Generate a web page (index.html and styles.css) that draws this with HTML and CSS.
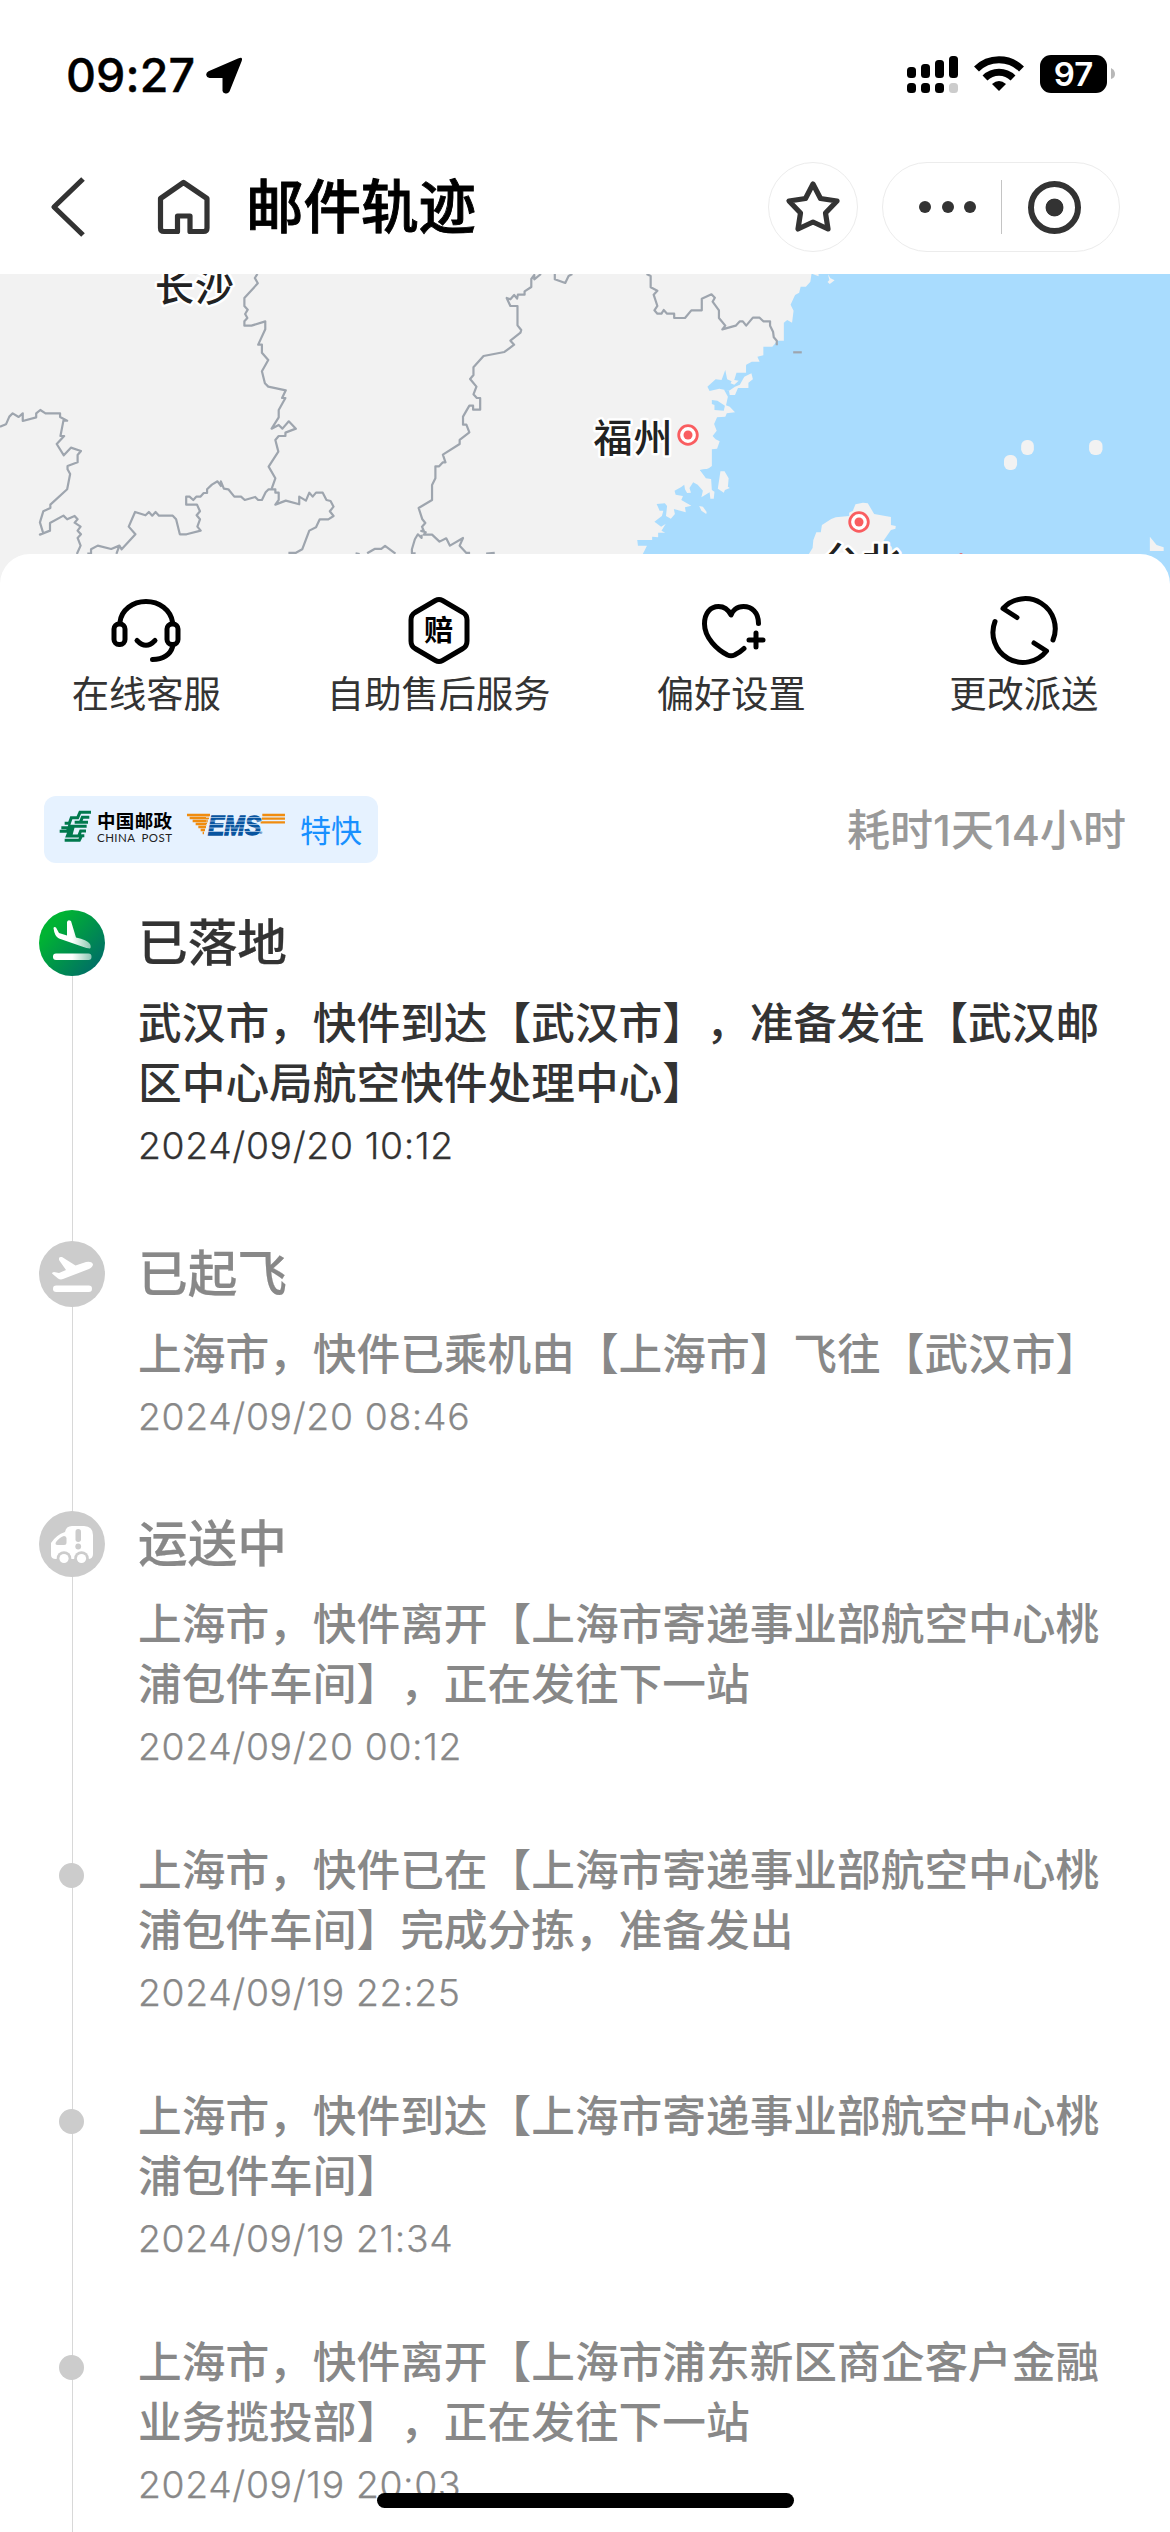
FILE: index.html
```html
<!DOCTYPE html>
<html lang="zh-CN">
<head>
<meta charset="utf-8">
<title>邮件轨迹</title>
<link rel="stylesheet" href="styles.css">
</head>
<body>
<div class="screen">
  <header class="status">
    <div class="status-left">
      <span class="clock">09:27</span>
      <svg class="locate" viewBox="206 57 37 37"><path d="M238 58.500Q243.500 56 241.500 61.500L229.500 91.500Q228 94 225.500 93.500Q223 93 222.500 91V78H209.500Q206.500 77.500 206.200 75Q206 72.500 208.500 71.300Z"/></svg>
    </div>
    <svg class="status-right" viewBox="907 55 209 38">
      <g><rect x="907" y="67" width="9" height="11" rx="3.500"/><rect x="921" y="64" width="9" height="14" rx="3.500"/><rect x="935" y="60" width="9" height="18" rx="3.500"/><rect x="949" y="56" width="9" height="22" rx="3.500"/>
      <rect x="907" y="83" width="9" height="10" rx="3.500"/><rect x="921" y="83" width="9" height="10" rx="3.500"/><rect x="935" y="83" width="9" height="10" rx="3.500"/><rect x="949" y="83" width="9" height="10" rx="3.500" fill="#ccc"/></g>
      <g fill="none" stroke="#000" stroke-width="7"><path d="M976.500 69A32 32 0 0 1 1021.500 69"/><path d="M985 78A20 20 0 0 1 1013 78"/></g>
      <path d="M999 91L992 84Q999 78 1006 84Z"/>
      <rect x="1040" y="55" width="67" height="38" rx="11"/>
      <path d="M1111 68Q1115 70 1115 74T1111 79Z" fill="#b8b8b8"/>
      <text class="battery" x="1073.500" y="86" text-anchor="middle">97</text>
    </svg>
  </header>

  <nav class="nav">
    <svg class="back" viewBox="50 177 36 60"><path d="M83 179L54 207L83 235"/></svg>
    <svg class="home" viewBox="156 179 56 58"><path d="M183.500 183.500L207 199.500V229Q207 232.500 203.500 232.500H190V217H177.500V232.500H164Q160.500 232.500 160.500 229V199.500Z"/></svg>
    <h1 class="nav-title">邮件轨迹</h1>
    <div class="round"><svg class="star" viewBox="785 180 56 54"><path d="M813 184L820.500 198.500L837 201L825.500 213L828 229L813 222L798 229L800.500 213L789 201L805.500 198.500Z"/></svg></div>
    <div class="capsule">
      <span class="dots"><i></i><i></i><i></i></span>
      <span class="divider"></span>
      <span class="target"></span>
    </div>
  </nav>

  <svg class="map" viewBox="0 0 1170 310">
    <rect width="1170" height="310" fill="#f2f2f2"/>
    <g transform="matrix(.3731 0 0 .3333 585 -14)">
      <path class="sea" d="M607 42L604 65L592 80H578L574 98L563 105L551 134L559 152L555 188L542 180L533 188V242H516L502 260H478V286L462 290L468 305H447L432 314V338L446 340L450 358L438 368V384H410L402 405H388L386 392L372 388L383 410L378 436L388 440L402 457L380 460L376 470L354 472L346 492L353 512L342 528L350 538L361 544L354 566L340 568V618L330 626L308 630L324 655L338 657L340 690L347 695L345 716H336L334 697L312 712L316 692L302 674L290 667L280 684L284 698L266 700L258 720L285 737L268 742L270 757L238 747L241 762L230 776L217 768L220 738L214 730L192 732L200 752H210L206 768L186 785L204 800L216 792L205 812L215 818H196V832L180 830V840H140L142 857H166L155 882V980H1568V42Z"/>
      <path class="sea" d="M432 314V338H406L400 360L412 362L400 374L390 370L393 364L381 358L376 330L366 360L350 358L328 380L334 393L360 386L386 392L402 380L415 374L427 350L446 340ZM340 420L355 422L375 437L372 452L347 450V435L340 432ZM308 630L320 645L338 657V625ZM266 674L258 681L240 692L243 704L262 708L266 718L274 700L268 688Z"/>
      <path class="land" d="M363 634L374 634L385 655L383 680L388 684L375 690L372 698L356 686ZM306 738L316 740L326 756L325 762L312 752ZM610 42H626V49ZM651 43L658 55L669 61L656 72L650 66L655 60ZM600 882L610 864L612 840L620 817H632L635 795L660 777L672 772L708 768V758L718 752L725 733L745 728L758 730L775 762L820 771V795L833 798L832 806L820 810L800 842L822 860L830 900H600ZM1514 830L1532 855L1551 862V873H1514Z"/>
      <rect class="land" x="1169" y="540" width="34" height="45" rx="15" ry="17"/><rect class="land" x="1123" y="585" width="35" height="45" rx="15" ry="17"/><rect class="land" x="1351" y="540" width="36" height="45" rx="15" ry="17"/>
      <g class="border"><path d="M165 42L176 48V82L194 92L184 104L194 138L186 151L194 161H205L211 150L220 161H239V174H268L285 151H313V116L339 103L348 113L342 125L359 151V174L376 197L368 208L404 197L415 184H423L432 197L450 173H468L478 184H496V197L504 215L506 232L514 242V256"/><path d="M558 277H581"/></g>
    </g>
    <g class="border" transform="matrix(.3731 0 0 .3333 0 -14)">
      <path d="M690 42L683 54L691 70L655 114V138L664 149L657 162L663 174L655 184V197H674L711 184V208L692 254H702V278L719 300L702 334L710 370L719 380L766 391L756 414H765L747 450V472L728 506L747 495L757 506L774 484L793 506L765 518V528H747L738 540L746 575L720 620L738 655L728 687"/>
      <path d="M0 500L16 493L25 470L34 460L50 471L61 460V483L97 472V460L108 450L122 460H161V471L180 482H170L162 528H172L152 552L171 586L190 563L217 573L208 585V607L181 618V628L188 642L180 688L135 734V744L116 754L107 787L116 820L107 824L134 812V789L170 767L180 778L200 768L208 778L200 788L216 800L208 812L217 823L208 834L216 857L206 882"/>
      <path d="M234 881H244V868L262 857L298 867L320 857L312 882M320 857L326 868L363 823L345 800L362 756L390 766L399 756L408 767L417 756L426 767H463L472 778L482 823H500L538 812L529 800L536 778L527 766L536 754L528 734H499V710H508L518 720L526 710H537L546 699H555V688L568 674L583 664L592 678L592 664L600 686L612 688L628 710H646L656 720L684 711L692 720H702L712 697L720 688H738V698H747V720L738 734L766 722L802 733V710L820 722L829 698L838 710L847 698H865L875 720L886 723L894 740L884 754L894 768L880 778H857L847 802L829 812L810 868L792 879H773"/>
      <path d="M1450 42L1432 58V45L1424 57V81L1406 94V104H1388L1386 116L1378 105L1368 118L1358 114L1368 138H1387V196L1397 210L1395 218L1368 242L1378 254L1352 276L1296 288L1269 322V345L1260 357L1277 380L1269 403L1278 414H1287V449H1268V437H1258L1241 470V494H1250L1258 517L1232 540V552L1187 584L1194 607H1187L1177 619H1167V655L1158 675V720L1122 744L1132 778L1140 789L1131 800L1136 813H1129L1141 817L1136 824H1158L1178 845L1196 835L1206 857L1241 834L1232 857L1250 879H1260M1130 824V834L1120 823L1112 838L1104 868V880H1114M1487 42V58L1515 69L1524 48L1534 42M953 880L964 882M984 880L1004 867H1022L1032 858L1060 881M1303 881L1326 879"/>
    </g>
    <path d="M957 281L961 279L965 281Z" fill="#e55"/>
    <g class="marker"><circle cx="688" cy="161" r="9.300"/><circle class="core" cx="688" cy="161" r="4.500"/><circle cx="859" cy="248" r="9.300"/><circle class="core" cx="859" cy="248" r="4.500"/></g>
    <g class="city"><text x="155" y="27">长沙</text><text x="593.500" y="178">福州</text><text x="822" y="302">台北</text></g>
  </svg>

  <main class="sheet">
    <section class="services">
      <div class="service">
        <svg viewBox="106.500 594 80 72"><path d="M120.500 622C122 610 133 601.500 146.500 601.500S171 610 173 622M173 647C171 654 164 659.500 153 659.500M137.500 640.500Q146.500 650 155.500 640.500"/><rect x="114.500" y="624" width="11" height="20.500" rx="5"/><rect x="167.500" y="624" width="11" height="20.500" rx="5"/></svg>
        <span>在线客服</span>
      </div>
      <div class="service">
        <svg viewBox="398.500 594 80 72"><path d="M435 600.500Q438.500 598.500 442 600.500L462.500 612.500Q466.500 615 466.500 620V641Q466.500 646 462.500 648.500L442 660.500Q438.500 662.500 435 660.500L414.500 648.500Q410.500 646 410.500 641V620Q410.500 615 414.500 612.500Z"/><text x="438.200" y="641" text-anchor="middle">赔</text></svg>
        <span>自助售后服务</span>
      </div>
      <div class="service">
        <svg viewBox="691.500 594 80 72"><path d="M759 623.500C759 612 752 606.500 744 606.500C737 606.500 733 611 731.500 615C729 610 725 606.500 719 606.500C711 606.500 705 613 705 624C705 638 718 650 728 655Q731.500 656.500 735 655Q741 652 744.500 648.500M749.500 640H763.500M756.500 633V647"/></svg>
        <span>偏好设置</span>
      </div>
      <div class="service">
        <svg viewBox="983.500 594 80 72"><path d="M1016.500 617.500L1002.500 608.500A30 30 0 0 1 1052.500 640M994.500 621.500A30 30 0 0 0 1046 651L1033.500 643"/></svg>
        <span>更改派送</span>
      </div>
    </section>

    <section class="summary">
      <div class="badge">
        <svg class="brands" viewBox="59 808 228 42">
          <g transform="matrix(.3333 0 0 .3333 30 780)">
            <path class="post" d="M183 97H150L143 113H124L118 130H104M178 112H157L151 127H134M89 154H112L118 139H170M94 143H122L112 168H146L152 153H168M174 127H150M104 181H148L155 167H163M130 139L122 168"/>
            <path class="ems-bar" d="M471 105H540M479 114H537M488 123H534M497 132H531M505 141H528M512 150H525M518 159H522M697 105H765M695 116H765M692 127H765"/>
          </g>
          <text class="cn" x="97" y="828" textLength="75">中国邮政</text>
          <text class="en" x="97" y="842" textLength="75">CHINA POST</text>
          <text class="ems" x="208" y="834.500" textLength="53" lengthAdjust="spacingAndGlyphs">EMS</text>
          <path class="slit" d="M206 817.500H262M206 821H262M206 824.500H262M206 828H262M206 831.500H262"/>
          <text class="reg" x="259" y="835">®</text>
        </svg>
        <span class="badge-text">特快</span>
      </div>
      <span class="elapsed">耗时1天14小时</span>
    </section>

    <ol class="timeline">
      <li class="step current">
        <svg class="node" viewBox="0 0 66 66"><defs><linearGradient id="green" x1="0.100" y1="0.200" x2="0.900" y2="0.900"><stop offset="0.100" stop-color="#00b333"/><stop offset="1" stop-color="#006c68"/></linearGradient><linearGradient id="fade"><stop offset="0.500" stop-color="#fff"/><stop offset="1" stop-color="#fff" stop-opacity="0.550"/></linearGradient></defs><circle cx="33" cy="33" r="33" fill="url(#green)"/><path fill="url(#fade)" d="M14.500 18Q15 16.500 17 17.500L20 23L28 25.500V12Q29 9 32 11L37 27.500Q48 29.500 51 34Q52.500 37.500 51 38.500Q48 38.500 43 36.500L20 28.500Q15.500 26.500 14.500 18Z"/><rect x="14" y="43.500" width="38.500" height="6.500" rx="3" fill="url(#fade)"/></svg>
        <h2>已落地</h2>
        <p>武汉市，快件到达【武汉市】，准备发往【武汉邮区中心局航空快件处理中心】</p>
        <time>2024/09/20 10:12</time>
      </li>
      <li class="step">
        <svg class="node" viewBox="0 0 66 66"><circle cx="33" cy="33" r="33" fill="#ccc"/><path fill="#fff" d="M20 17Q20.500 15.500 23 16L36.500 24.500L47 21Q52.500 20 54 23Q54 26 50 28L24 38Q21.500 39 19 37.500L13 32.500Q13 31 15 31L20 32L27 29L20 19Z"/><rect x="14" y="44.500" width="39" height="6.500" rx="3.200" fill="#fff"/></svg>
        <h2>已起飞</h2>
        <p>上海市，快件已乘机由【上海市】飞往【武汉市】</p>
        <time>2024/09/20 08:46</time>
      </li>
      <li class="step">
        <svg class="node" viewBox="0 0 66 66"><circle cx="33" cy="33" r="33" fill="#ccc"/><path fill="#fff" d="M12 32Q17 24 26 21Q27 15 33 15H45Q54 15.500 54 24V43Q54 48 49 48H17Q12 48 12 44Z"/><g fill="#ccc"><path d="M17 31Q21 26 25 25Q27 25 27.500 27V31.500Q27.500 34 25 34H18.500Q15.500 34 17 31Z"/><rect x="36.500" y="18" width="5.500" height="13" rx="2.700"/><circle cx="39.200" cy="35.500" r="2.900"/><circle cx="25" cy="47.500" r="7.300"/><circle cx="42.500" cy="47.500" r="7.300"/></g><circle cx="25" cy="47.500" r="4.600" fill="#fff"/><circle cx="42.500" cy="47.500" r="4.600" fill="#fff"/></svg>
        <h2>运送中</h2>
        <p>上海市，快件离开【上海市寄递事业部航空中心桃浦包件车间】，正在发往下一站</p>
        <time>2024/09/20 00:12</time>
      </li>
      <li class="step minor">
        <span class="dot"></span>
        <p>上海市，快件已在【上海市寄递事业部航空中心桃浦包件车间】完成分拣，准备发出</p>
        <time>2024/09/19 22:25</time>
      </li>
      <li class="step minor">
        <span class="dot"></span>
        <p>上海市，快件到达【上海市寄递事业部航空中心桃浦包件车间】</p>
        <time>2024/09/19 21:34</time>
      </li>
      <li class="step minor">
        <span class="dot"></span>
        <p>上海市，快件离开【上海市浦东新区商企客户金融业务揽投部】，正在发往下一站</p>
        <time>2024/09/19 20:03</time>
      </li>
    </ol>
  </main>
  <div class="home-indicator"></div>
</div>
</body>
</html>
```
FILE: styles.css
```css
* { box-sizing: border-box; margin: 0; padding: 0; }

body {
  background: #fff;
  font-family: Inter, "Noto Sans CJK SC", sans-serif;
  color: #333;
  text-spacing-trim: space-all;
}

.screen {
  position: relative;
  width: 1170px;
  height: 2532px;
  overflow: hidden;
  display: flex;
  flex-direction: column;
}

.status {
  flex: none;
  height: 140px;
  display: flex;
  justify-content: space-between;
  align-items: flex-start;
  padding: 55px 54px 0 66px;
}
.status-left { display: flex; align-items: center; height: 40px; gap: 12px; }
.clock { font-size: 46.500px; font-weight: 500; -webkit-text-stroke: 0.400px #000; line-height: 40px; color: #000; width: 128px; letter-spacing: 0.100px; white-space: nowrap; }
.locate { width: 37px; height: 37px; }
.status-right { width: 209px; height: 38px; }
.battery { font-size: 33px; font-weight: 600; fill: #fff; }

.nav {
  flex: none;
  height: 134px;
  display: flex;
  align-items: center;
  padding-left: 50px;
}
.nav svg { fill: none; stroke: #333; stroke-width: 5.200; stroke-linejoin: round; }
.back { width: 36px; height: 60px; }
.home { width: 56px; height: 58px; margin-left: 70px; }
.nav-title { margin-left: 34px; font-size: 57.500px; line-height: 80px; font-weight: 500; -webkit-text-stroke: 0.900px #000; color: #000; width: 240px; white-space: nowrap; }
.round { margin-left: 282px; width: 90px; height: 90px; border: 1px solid #ececec; border-radius: 50%; display: grid; place-items: center; }
.star { width: 56px; height: 54px; }
.capsule { margin-left: 24px; width: 238px; height: 90px; border: 1px solid #ececec; border-radius: 45px; display: flex; align-items: center; padding-left: 36px; }
.dots { display: flex; gap: 10.500px; width: 82px; }
.dots i { width: 12px; height: 12px; border-radius: 50%; background: #333; }
.divider { width: 1px; height: 54px; background: #c4c4c4; }
.target { margin-left: 26px; width: 53px; height: 53px; border: 6.500px solid #333; border-radius: 50%; background: radial-gradient(circle, #333 8.500px, transparent 9.300px); }

.map { flex: none; display: block; width: 1170px; height: 310px; }
.sea { fill: #a9dcfe; }
.land { fill: #f2f2f2; }
.border path { fill: none; stroke: #9ea5ae; stroke-width: 2.200px; vector-effect: non-scaling-stroke; stroke-linejoin: round; }
.marker circle { fill: #fff; stroke: #f95d60; stroke-width: 2.800; }
.marker .core { fill: #f95d60; stroke: none; }
.city text { font-size: 39px; font-weight: 500; fill: #222; stroke: #fff; stroke-width: 5px; paint-order: stroke; stroke-linejoin: round; letter-spacing: 1px; }

.sheet {
  flex: none;
  position: relative;
  margin-top: -30px;
  background: #fff;
  border-radius: 30px 30px 0 0;
  padding-top: 40px;
}

.services { display: grid; grid-template-columns: repeat(4, 1fr); }
.service { display: flex; flex-direction: column; align-items: center; }
.service svg { width: 80px; height: 72px; fill: none; stroke: #000; stroke-width: 5; stroke-linecap: round; stroke-linejoin: round; }
.service svg text { font-size: 29px; font-weight: 700; fill: #000; stroke: none; }
.service span { margin-top: 1.500px; font-size: 37.300px; line-height: 54px; font-weight: 400; }

.summary { display: flex; justify-content: space-between; align-items: center; margin-top: 74.500px; padding: 0 44px 0 44px; }
.badge { display: flex; align-items: center; height: 67px; width: 334px; padding-left: 15px; background: #e6f2ff; border-radius: 12px; }
.brands { width: 228px; height: 42px; margin-bottom: 2px; }
.badge-text { margin-left: 13px; padding-bottom: 3px; font-size: 31px; color: #1890ff; white-space: nowrap; }
.post { fill: none; stroke: #00794d; stroke-width: 9; }
.ems-bar { stroke: #f08c0f; stroke-width: 7; }
.cn { font-size: 18.500px; font-weight: 700; }
.cn, .en { fill: #000; }
.en { font-family: Lato, sans-serif; font-size: 11.500px; fill: #222; word-spacing: 3px; }
.ems { font: italic 700 28.500px "Liberation Sans", sans-serif; fill: #07549f; stroke: #07549f; stroke-width: 1.400; }
.slit { stroke: #e6f2ff; stroke-width: 0.900; opacity: 0.700; }
.reg { font-size: 5px; fill: #07549f; }
.elapsed { font-size: 43px; line-height: 60px; padding-top: 1px; font-weight: 500; color: #999; letter-spacing: 0; }

.timeline { list-style: none; margin-top: 46px; }
.step {
  position: relative;
  padding: 0 50px 65.500px 138px;
  color: #888;
}
.step::before { content: ""; position: absolute; left: 72px; top: 0; bottom: 0; width: 1px; background: #d8d8d8; }
.step:first-child::before { top: 34px; }
.current { color: #333; }
.node { position: absolute; left: 39px; top: 1px; width: 66px; height: 66px; }
.step h2 { font-size: 49.700px; line-height: 68px; font-weight: 500; -webkit-text-stroke: 0.200px currentColor; margin-bottom: 17px; }
.step p { font-size: 43.700px; line-height: 60px; font-weight: 500; margin-bottom: 4px; }
.step time { display: block; font-size: 37.300px; line-height: 56px; font-weight: 300; -webkit-text-stroke: 0.250px currentColor; letter-spacing: 0.650px; }
.minor { padding-bottom: 66px; }
.dot { position: absolute; left: 59px; top: 22px; width: 25px; height: 25px; border-radius: 50%; background: #ccc; }

.home-indicator { position: absolute; left: 377px; top: 2493px; width: 417px; height: 15px; border-radius: 8px; background: #000; }
```
